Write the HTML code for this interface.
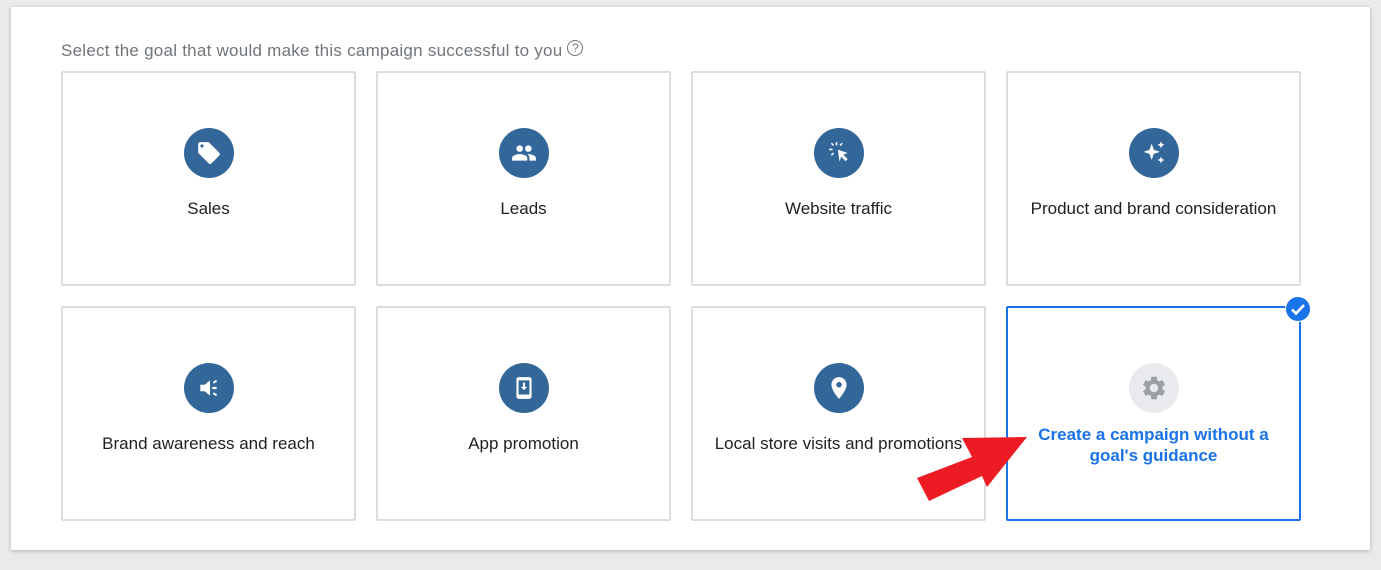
<!DOCTYPE html>
<html><head><style>
body{margin:0;width:1381px;height:570px;background:#e9eaec;font-family:"Liberation Sans",Roboto,sans-serif;position:relative;overflow:hidden}
.panel{position:absolute;left:11px;top:7px;width:1359px;height:543px;background:#fff;box-shadow:0 1px 4px rgba(0,0,0,.25)}
.title{position:absolute;left:61px;top:40px;font-size:17px;color:#70757a;letter-spacing:0.25px}
.card{position:absolute;width:291px;height:211px;border:2px solid #dadce0;border-radius:2px;background:#fff}
.ic{position:absolute;left:121px;top:55px;width:50px;height:50px;border-radius:50%;background:#336699;display:flex;align-items:center;justify-content:center}
.lbl{position:absolute;left:0;right:0;top:126px;text-align:center;font-size:17px;color:#202124}
</style></head><body>
<div class="panel"></div>
<div class="title">Select the goal that would make this campaign successful to you <span style="display:inline-block;width:14px;height:14px;border:1.5px solid #70757a;border-radius:50%;font-size:12px;line-height:14px;text-align:center;vertical-align:4px;letter-spacing:0">?</span></div>

<div class="card" style="left:61px;top:71px"><div class="ic"><svg width="26" height="26" viewBox="0 0 24 24"><path fill="#fff" d="M21.4 11.6l-9-9C12 2.2 11.5 2 11 2H4c-1.1 0-2 .9-2 2v7c0 .55.22 1.05.59 1.42l9 9c.36.36.86.58 1.41.58s1.05-.22 1.41-.59l7-7c.37-.36.59-.86.59-1.410s-.23-1.06-.6-1.4zM5.5 7C4.67 7 4 6.33 4 5.5S4.67 4 5.5 4 7 4.67 7 5.5 6.33 7 5.5 7z"/></svg></div><div class="lbl">Sales</div></div>
<div class="card" style="left:376px;top:71px"><div class="ic"><svg width="26" height="26" viewBox="0 0 24 24"><path fill="#fff" d="M16 11c1.66 0 2.99-1.34 2.99-3S17.66 5 16 5s-3 1.34-3 3 1.34 3 3 3zm-8 0c1.66 0 2.99-1.34 2.990-3S9.66 5 8 5 5 6.34 5 8s1.34 3 3 3zm0 2c-2.33 0-7 1.17-7 3.5V19h14v-2.5C15 14.17 10.33 13 8 13zm8 0c-.29 0-.62.02-.97.05 1.16.84 1.97 1.97 1.97 3.45V19h6v-2.5c0-2.33-4.67-3.5-7-3.5z"/></svg></div><div class="lbl">Leads</div></div>
<div class="card" style="left:691px;top:71px"><div class="ic"><svg width="26" height="26" viewBox="0 0 24 24"><path fill="#fff" d="M11 9l9 3-4 1.5 4 4-2 2-4-4L12.5 20zM9 2h1.5v3H9zM3 8h3v1.5H3zM4.5 3.5l1-1 2 2-1 1zM12.5 4.5l2-2 1 1-2 2zM4.5 13.5l2-2 1 1-2 2z"/></svg></div><div class="lbl">Website traffic</div></div>
<div class="card" style="left:1006px;top:71px"><div class="ic"><svg width="28" height="28" viewBox="0 0 24 24"><path fill="#fff" d="M10 4l1.8 5.2L17 11l-5.2 1.8L10 18l-1.8-5.2L3 11l5.2-1.8zM18 2l.9 2.1L21 5l-2.1.9L18 8l-.9-2.1L15 5l2.1-.9zM18 15l.9 2.1 2.1.9-2.1.9L18 21l-.9-2.1L15 18l2.1-.9z"/></svg></div><div class="lbl">Product and brand consideration</div></div>

<div class="card" style="left:61px;top:306px"><div class="ic"><svg width="26" height="26" viewBox="0 0 24 24"><path fill="#fff" d="M4 9h4l5-4v14l-5-4H4zM15 11h4v2h-4zM15.5 6.5l3-2 1 1.5-3 2zM15.5 17.5l3 2 1-1.5-3-2z"/></svg></div><div class="lbl">Brand awareness and reach</div></div>
<div class="card" style="left:376px;top:306px"><div class="ic"><svg width="26" height="26" viewBox="0 0 24 24"><path fill="#fff" d="M7 2h10c1.1 0 2 .9 2 2v16c0 1.1-.9 2-2 2H7c-1.1 0-2-.9-2-2V4c0-1.1.9-2 2-2zm0 3v13h10V5zm4 2h2v4h2l-3 3-3-3h2z"/></svg></div><div class="lbl">App promotion</div></div>
<div class="card" style="left:691px;top:306px"><div class="ic"><svg width="26" height="26" viewBox="0 0 24 24"><path fill="#fff" d="M12 2C8.13 2 5 5.13 5 9c0 5.25 7 13 7 13s7-7.750 7-13c0-3.87-3.13-7-7-7zm0 9.5c-1.38 0-2.5-1.12-2.5-2.5s1.12-2.5 2.5-2.5 2.5 1.12 2.5 2.5-1.12 2.5-2.5 2.5z"/></svg></div><div class="lbl">Local store visits and promotions</div></div>
<div class="card" style="left:1006px;top:306px;border-color:#1a73e8"><div class="ic" style="background:#e8eaed"><svg width="28" height="28" viewBox="0 0 24 24"><path fill="#9aa0a6" d="M19.14 12.94c.04-.3.06-.61.06-.94s-.02-.64-.07-.94l2.03-1.58a.49.49 0 00.12-.61l-1.92-3.32a.49.49 0 00-.59-.22l-2.39.96c-.5-.38-1.03-.7-1.62-.94l-.36-2.54a.48.48 0 00-.48-.41h-3.84c-.24 0-.43.17-.47.41l-.36 2.54c-.59.24-1.13.57-1.62.94l-2.39-.96a.49.49 0 00-.59.22L2.74 8.87c-.12.21-.8.47.12.61l2.03 1.58c-.05.3-.09.63-.09.94s.02.64.07.94l-2.03 1.58a.49.49 0 00-.12.61l1.92 3.32c.12.22.37.29.59.22l2.39-.96c.5.38 1.03.7 1.62.94l.36 2.54c.5.24.24.41.48.41h3.84c.24 0 .44-.17.47-.41l.36-2.54c.59-.24 1.13-.56 1.62-.94l2.39.96c.22.08.47 0 .59-.22l1.92-3.32c.12-.22.07-.47-.12-.61zM12 15.6c-1.98 0-3.6-1.62-3.6-3.6s1.62-3.6 3.6-3.6 3.6 1.62 3.6 3.6-1.62 3.6-3.6 3.6z"/></svg></div>
<div style="position:absolute;left:0;right:0;top:116px;text-align:center;font-size:17px;font-weight:bold;color:#1a73e8;line-height:21px">Create a campaign without a<br>goal's guidance</div></div>
<div style="position:absolute;left:1285px;top:296px;width:26px;height:26px;border-radius:50%;background:#1a73e8;border:1px solid #fff;box-sizing:border-box"><svg width="24" height="24" viewBox="0 0 24 24"><path d="M6 12.5l4 4 8-8.5" stroke="#fff" stroke-width="2.6" fill="none"/></svg></div>
<svg style="position:absolute;left:0;top:0" width="1381" height="570"><polygon fill="#ed1c24" points="1027,437 962,438 972,457 917,478 929,501 982,476 987,487"/></svg>
</body></html>
